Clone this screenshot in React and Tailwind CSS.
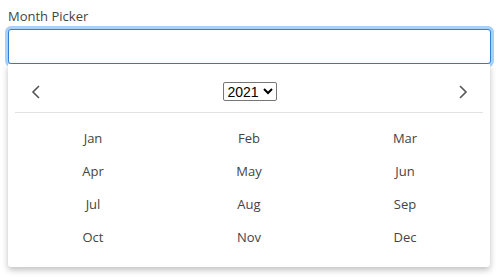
const months = ["Jan", "Feb", "Mar", "Apr", "May", "Jun", "Jul", "Aug", "Sep", "Oct", "Nov", "Dec"];

function Chevron({ dir }) {
  return (
    <svg width="10" height="16" viewBox="0 0 10 16" fill="none">
      <polyline
        points={dir === "left" ? "8,2 2,8 8,14" : "2,2 8,8 2,14"}
        stroke="#555"
        strokeWidth="1.6"
      />
    </svg>
  );
}

export default function App() {
  return (
    <div className="w-[502px] h-[277px] bg-white p-2 font-['Open_Sans',sans-serif] text-[#444]">
      <label className="block text-[13px] leading-[15px] mt-[1px] mb-[5px]">Month Picker</label>
      <div className="w-[483px] h-[35px] border border-[#2f80d6] rounded-[3px] ring-[3px] ring-[#a8d1f7] bg-white"></div>
      <div className="w-[482px] h-[203px] bg-white rounded-b-[3px] shadow-[0_3px_6px_rgba(0,0,0,0.25)] px-[7px]">
        <div className="h-[49px] flex items-center justify-between pl-[16px] pr-[15px] pt-[7px] border-b border-[#e2e2e2]">
          <Chevron dir="left" />
          <select className="border border-[#767676] h-[19px] text-[14px] leading-[17px] text-black font-['Liberation_Sans',sans-serif] px-0 rounded-[2px]">
            <option>2021</option>
          </select>
          <Chevron dir="right" />
        </div>
        <div className="grid grid-cols-3 pt-[9px]">
          {months.map((m) => (
            <div key={m} className="h-[33px] flex items-center justify-center text-[13px]">
              {m}
            </div>
          ))}
        </div>
      </div>
    </div>
  );
}
